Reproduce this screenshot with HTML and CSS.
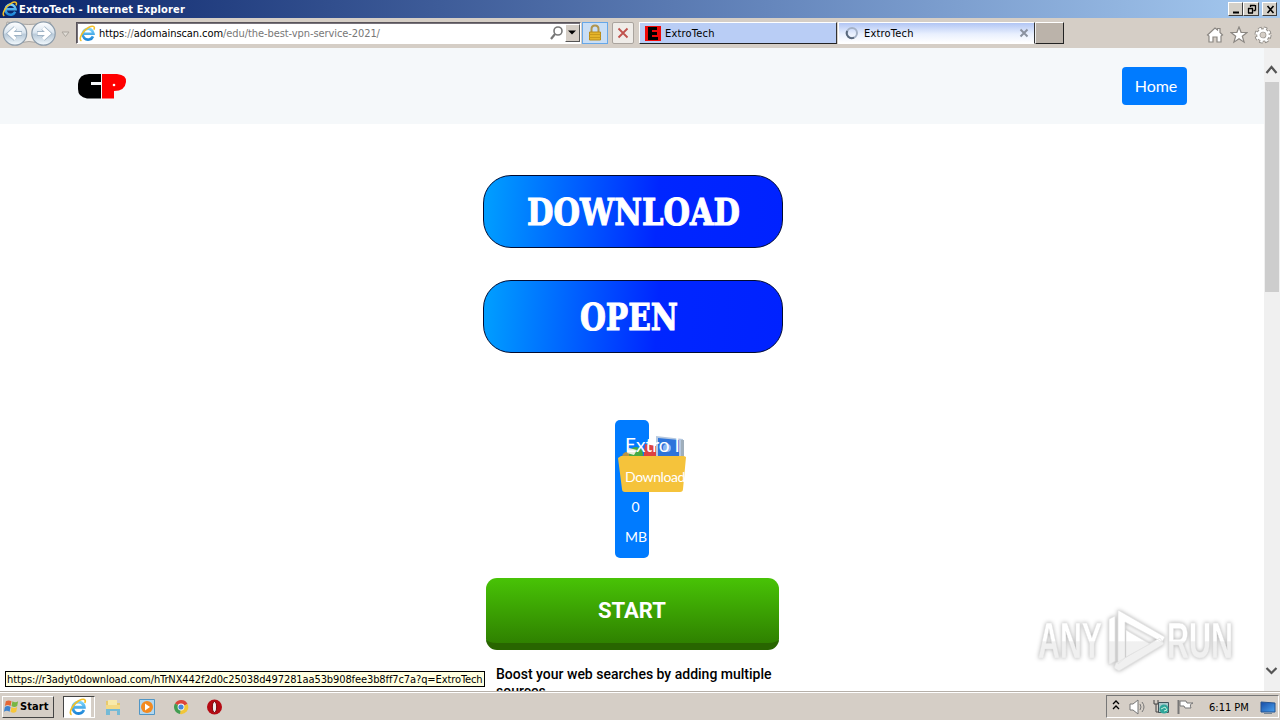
FILE: index.html
```html
<!DOCTYPE html>
<html lang="en">
<head>
<meta charset="utf-8">
<title>ExtroTech</title>
<link rel="stylesheet" href="styles.css">
</head>
<body>
<svg class="defs" width="0" height="0">
  <defs>
    <linearGradient id="ieBlue" x1="0" y1="0" x2="0" y2="1"><stop offset="0" stop-color="#7bd3fb"/><stop offset="1" stop-color="#1c86d8"/></linearGradient>
    <linearGradient id="orb" x1="0" y1="0" x2="0" y2="1"><stop offset="0" stop-color="#ffffff"/><stop offset=".45" stop-color="#dbe6f0"/><stop offset=".55" stop-color="#b9cad9"/><stop offset="1" stop-color="#f4fbff"/></linearGradient>
    <linearGradient id="screen" x1="0" y1="0" x2="1" y2="1"><stop offset="0" stop-color="#154ba5"/><stop offset="1" stop-color="#4ba2ef"/></linearGradient>
    <linearGradient id="mark" gradientUnits="userSpaceOnUse" x1="0" y1="0" x2="0" y2="70"><stop offset=".5" stop-color="#ffffff"/><stop offset=".51" stop-color="#f0f0f0"/></linearGradient>
    <symbol id="ie" viewBox="0 0 16 16">
      <path d="M13.2 10.7A5.1 5.1 0 1 1 13.6 8.2H4.5" fill="none" stroke="url(#ieBlue)" stroke-width="2.5"/>
      <path d="M2.3 14.9C-.8 13.2 3.5 5.2 9 2.3c4-2.2 6.600-1.200 5 2.100" fill="none" stroke="#f3bf28" stroke-width="1.500"/>
    </symbol>
  </defs>
</svg>
<header class="titlebar">
  <svg class="title-icon" width="16" height="16"><use href="#ie"/></svg>
  <span class="title-text">ExtroTech - Internet Explorer</span>
  <div class="win-buttons">
    <span class="win-btn"><svg width="14" height="11"><path d="M3 8.500h6" stroke="#000" stroke-width="2"/></svg></span>
    <span class="win-btn"><svg width="14" height="11"><path d="M5 1.500h5M5.500 1v2M10.500 1v5.500M8.500 6.500h2M3 4.500h5M3.500 4v5M7.500 4v5M3 9h5" fill="none" stroke="#000" stroke-width="1.300"/></svg></span>
    <span class="win-btn win-close"><svg width="14" height="11"><path d="M3.500 2l6 7M9.500 2l-6 7" stroke="#000" stroke-width="1.600"/></svg></span>
  </div>
</header>
<nav class="toolbar">
  <svg class="nav-arrows" width="76" height="29" viewBox="0 0 76 29">
    <path d="M7 4Q29 9 50 4L55 15Q47 27 42 27Q29 20 16 27L4 20Z" fill="#eeeae5" stroke="#aaa6a1"/>
    <g fill="url(#orb)" stroke="#8c9cab" stroke-width="1.200"><circle cx="15" cy="15.500" r="11.700"/><circle cx="43.500" cy="15.500" r="11.700"/></g>
    <g fill="none" stroke="#9fb3c5" stroke-width="4.800"><path d="M22 15.500H10M15.500 10l-6 5.500 6 5.500M37 15.500h12M43 10l6 5.500-6 5.500"/></g>
    <g fill="none" stroke="#fff" stroke-width="3.200"><path d="M21.500 15.500H10M15.500 10l-6 5.500 6 5.500M37.500 15.500h12M43 10l6 5.500-6 5.500"/></g>
    <path d="M62 14h7l-3.500 4.500Z" fill="#e1ddd7" stroke="#aaa59e"/>
  </svg>
  <div class="address">
    <svg width="17" height="17"><use href="#ie"/></svg>
    <span class="url"><span class="dark">https</span>://<span class="dark">adomainscan.com</span>/edu/the-best-vpn-service-2021/</span>
    <svg class="search" width="15" height="16"><circle cx="9" cy="6" r="4" fill="none" stroke="#777" stroke-width="1.600"/><path d="M6 9l-4 5" stroke="#777" stroke-width="2.200"/></svg>
    <span class="drop"><svg width="12" height="15"><path d="M2 5.500h8L6 9.500Z"/></svg></span>
  </div>
  <span class="lock"><svg width="16" height="18"><path d="M4.500 8V5q0-3.500 3.500-3.500T11.500 5v3" fill="none" stroke="#b0954d" stroke-width="2"/><path d="M2.500 8h11v8h-11z" fill="#e4b42a" stroke="#b98b1a"/><path d="M2.500 10.500h11M2.500 13.500h11" stroke="#c99a1c"/></svg></span>
  <span class="stop"><svg width="14" height="14"><path d="M2.500 2.500l9 9M11.500 2.500l-9 9" stroke="#c0524d" stroke-width="1.800"/></svg></span>
  <div class="tab tab-one"><svg width="16" height="15"><path d="M0 0h16v15H0z" fill="#f00808"/><path d="M3 1h9v3H7v2h5v3H7v2h6v3H3z"/></svg><span class="tab-text">ExtroTech</span></div>
  <div class="tab tab-two"><svg width="14" height="14"><circle cx="7" cy="7" r="5" fill="none" stroke="#a4b1c6" stroke-width="2"/><path d="M2.200 5A5 5 0 0 0 9 11.600" fill="none" stroke="#59687d" stroke-width="2"/></svg><span class="tab-text">ExtroTech</span><svg class="tab-close" width="10" height="10"><path d="M1.500 1.500l7 7M8.500 1.500l-7 7" stroke="#8b929f" stroke-width="2"/></svg></div>
  <span class="new-tab"></span>
  <div class="tools">
    <svg width="18" height="18"><path d="M1.500 9L9 2l2.500 2V2.500H14v4L16.500 9 15 10v6h-4v-5H7v5H3v-6z" fill="#fff" stroke="#8b8782" stroke-width="1.200"/></svg>
    <svg width="18" height="18"><path d="M9 1l2.100 5.300 5.900.2-4.700 3.700 1.800 6L9 12.800l-5.100 3.400 1.800-6L1 6.500l5.900-.2Z" fill="#fff" stroke="#8b8782" stroke-width="1.200"/></svg>
    <svg width="18" height="18"><circle cx="9" cy="9" r="6.500" fill="none" stroke="#8b8782" stroke-width="4" stroke-dasharray="3.100 2"/><circle cx="9" cy="9" r="4.700" fill="none" stroke="#8b8782" stroke-width="4"/><circle cx="9" cy="9" r="6.300" fill="none" stroke="#fff" stroke-width="2.600" stroke-dasharray="2.400 2.550"/><circle cx="9" cy="9" r="4.600" fill="none" stroke="#fff" stroke-width="2.500"/></svg>
  </div>
</nav>
<main class="viewport">
  <div class="page">
    <header class="site-header">
      <svg class="logo" width="50" height="28" viewBox="0 0 50 28">
        <path d="M24 2V10H14v3h10V26.500H10Q1 25 1 17V12Q2 2 12 2Z"/>
        <path d="M14 12h9" stroke="#f5f8fa" stroke-width="1.500"/><path d="M25 2h15q10 1 9 8-1 9-12 9v7.500H25Z" fill="#f00"/><circle cx="37" cy="13" r="1.300" fill="#fff"/>
      </svg>
      <a class="home">Home</a>
    </header>
    <a class="pill"><svg width="298" height="71"><text x="43" y="49" textLength="213" lengthAdjust="spacingAndGlyphs">DOWNLOAD</text></svg></a>
    <a class="pill pill-open"><svg width="298" height="71"><text x="96" y="49" textLength="98" lengthAdjust="spacingAndGlyphs">OPEN</text></svg></a>
    <div class="offer">
      <svg class="folder" width="70" height="60" viewBox="0 0 70 60">
        <path d="M38 1l27 3v23H38Z" fill="#b5c8df"/><path d="M40 3l21 2v20H40Z" fill="#2d74db"/><circle cx="49" cy="13" r="4" fill="#8ab6f4"/><path d="M63 5h3v18h-3z" fill="#9faebb"/>
        <circle cx="9" cy="22" r="5" fill="#b59447"/><circle cx="18" cy="19" r="7" fill="#47aa43"/><path d="M27 9l11 2v16H25Z" fill="#dc4141"/><path d="M11 13l8 2-3 5-7-2Z" fill="#e9edda"/>
        <path d="M0 23l3-2h63l2 1-3 32q0 3-3 3H7q-3 0-3-3Z" fill="#f5c33b"/>
      </svg>
      <div class="offer-title">Extro I</div>
      <div class="offer-sub">Download</div>
      <div class="offer-size">0</div>
      <div class="offer-unit">MB</div>
    </div>
    <a class="start">START</a>
    <p class="copy">Boost your web searches by adding multiple<br>sources.</p>
  </div>
  <aside class="scrollbar">
    <svg width="16" height="34"><path d="M2.500 25l5-6 5 6" fill="none" stroke="#555" stroke-width="2.200"/></svg>
    <span class="thumb"></span>
    <svg class="scroll-down" width="16" height="30"><path d="M2.500 7l5 5 5-5" fill="none" stroke="#555" stroke-width="2.200"/></svg>
  </aside>
  <div class="status">https://r3adyt0download.com/hTrNX442f2d0c25038d497281aa53b908fee3b8ff7c7a?q=ExtroTech</div>
  <svg class="watermark" width="204" height="70" viewBox="0 0 204 70">
    <g class="mark-text"><text x="4" y="52" textLength="64" lengthAdjust="spacingAndGlyphs">ANY</text><text x="133" y="52" textLength="66" lengthAdjust="spacingAndGlyphs">RUN</text></g>
    <path class="mark-shape" d="M75 13l6-3v45l-6 4ZM84 4l47 27-3 5-37-20v36l-7 6ZM82 57l44-25 4 6-45 27-5-3ZM92 24l24 14-24 13Z"/>
  </svg>
</main>
<footer class="taskbar">
  <div class="start-menu"><svg width="17" height="18" viewBox="0 0 18 18"><path d="M3 3q3-2 6 0L8 8Q5 6 2 8Z" fill="#e56735"/><path d="M10 3q3 2 6 0l-1 5q-3 2-6 0Z" fill="#78b645"/><path d="M2 9q3-2 6 0l-1 5q-3-2-6 0Z" fill="#3e83ce"/><path d="M9 9q3 2 6 0l-1 5q-3 2-6 0Z" fill="#f7c63a"/></svg><span>Start</span></div>
  <div class="task-active"><svg width="18" height="18"><use href="#ie"/></svg></div>
  <div class="launch">
    <svg width="18" height="18"><path d="M2 3h5l1 2h8v5H2z" fill="#e7c96d"/><path d="M4 2h9v5H4z" fill="#f8eaaa"/><path d="M2 9h14v8h-3v-4H6v4H2z" fill="#75bad6"/><path d="M2 7h14v4H2z" fill="#f3da86"/></svg>
    <svg width="18" height="18"><path d="M1.500 1.500h15v15h-15z" fill="#b2d7ef" stroke="#5196c5"/><circle cx="9" cy="9" r="6" fill="#f38a20"/><path d="M7 5.500v7l5-3.500z" fill="#fff"/></svg>
    <svg width="18" height="18" viewBox="0 0 18 18"><path d="M9 9L3 5.500A7 7 0 0 1 15.500 6Z" fill="#dc453b"/><path d="M9 9l6.500-3A7 7 0 0 1 8 16Z" fill="#f1c638"/><path d="M9 9L8 16A7 7 0 0 1 3 5.500Z" fill="#429d51"/><circle cx="9" cy="9" r="3.400" fill="#fff"/><circle cx="9" cy="9" r="2.600" fill="#4587dc"/></svg>
    <svg width="18" height="18"><circle cx="8.500" cy="9" r="7.500" fill="#b50a13"/><ellipse cx="8.500" cy="9" rx="2.200" ry="5.500" fill="#eee" stroke="#740006"/></svg>
  </div>
  <div class="tray">
    <svg width="142" height="22" viewBox="0 0 142 22">
      <path d="M6 8l3-3 3 3M6 13l3-3 3 3" fill="none" stroke="#000" stroke-width="1.300"/>
      <path d="M23 8h3l5-4v14l-5-4h-3z" fill="#fff" stroke="#777"/><path d="M33 8q2 3 0 6M35 6q4 5 0 10" fill="none" stroke="#777"/>
      <path d="M51.500 6.500h10v10h-10z" fill="#a7c9cb" stroke="#42545c"/><path d="M47 4v4h4V4M49 8v8h3" fill="none" stroke="#444"/><circle cx="57" cy="13" r="4.500" fill="#2fa69a"/><path d="M54 13l4-2 2 3-3 1" stroke="#c8f0dd" fill="none"/>
      <path d="M71.500 4v14" stroke="#777" stroke-width="2"/><path d="M73 5h6l1 2h6q-4 1-2 5h-6l-1-2h-4z" fill="#fff" stroke="#777"/>
    </svg>
    <span class="clock">6:11 PM</span>
    <svg class="desktop-icon" width="16" height="16"><path d="M1 3l14 1v9H1z" fill="url(#screen)" stroke="#24538f"/><path d="M4 14h8v1H4z" fill="#758696"/></svg>
  </div>
</footer>
</body>
</html>
```
FILE: styles.css
```css
* { box-sizing: border-box; }
body { margin: 0; width: 1280px; height: 720px; overflow: hidden; display: flex; flex-direction: column; background: #fff; color: #000; font-family: "DejaVu Sans Condensed", "DejaVu Sans", sans-serif; font-size: 11px; }
svg { display: block; flex: none; }
.defs { position: absolute; }
.titlebar { height: 18px; flex: none; display: flex; align-items: center; padding: 0 2px; background: linear-gradient(90deg, #0a246a, #6586bc 60%, #a6caf0); color: #fff; }
.title-text { margin-left: 1px; font-weight: bold; white-space: nowrap; letter-spacing: .16px; }
.win-buttons { margin-left: auto; display: flex; padding-right: 1px; }
.win-btn { width: 15.500px; height: 14px; padding: 1px; overflow: hidden; background: #d4d0c8; border: 1px solid; border-color: #fff #404040 #404040 #fff; }
.win-close { margin-left: 3px; }
.toolbar { height: 30px; flex: none; display: flex; align-items: flex-start; padding-top: 4px; background: #d5cec6; }
.nav-arrows { margin-top: -4px; }
.address { width: 505px; height: 22px; display: flex; align-items: center; padding-left: 2px; background: #fff; border: 1px solid; border-color: #59545a #fff #fff #59545a; box-shadow: inset 1px 1px #77727a; }
.url { margin-left: 3px; width: 450px; padding-top: 1px; white-space: nowrap; color: #777; letter-spacing: -.08px; }
.dark { color: #000; }
.drop { margin-left: 1px; width: 15px; height: 18px; background: #d5cec6; border: 1px solid; border-color: #fff #555 #555 #fff; }
.lock { width: 26px; height: 22px; margin-left: 1px; padding: 1px 4px; background: #c9def5; border: 1px solid #66a7e8; }
.stop { width: 22px; height: 22px; margin-left: 4px; padding: 3px; background: #efece8; border: 1px solid #aaa49e; border-radius: 2px; }
.tab { height: 22px; display: flex; align-items: center; border: 1px solid; border-color: #fff #333 #222 #fff; }
.tab-one { width: 198px; margin-left: 5px; padding-left: 5px; background: #b9cdf5; }
.tab-two { width: 197px; margin-left: 1px; padding-left: 6px; background: linear-gradient(#b1c5f4, #e9f0fe 55%, #fff); border-bottom-color: #fff; }
.tab-text { margin-left: 4px; padding-top: 1px; white-space: nowrap; letter-spacing: .2px; }
.tab-two .tab-text { margin-left: 5px; }
.tab-close { margin-left: auto; margin-right: 5px; }
.new-tab { width: 29px; height: 22px; background: #bbb3aa; border: 1px solid; border-color: #fff #222 #222 #eee; }
.tools { margin: 4px 8px 0 auto; display: flex; gap: 6px; }
.viewport { position: relative; height: 644px; flex: none; display: flex; overflow: hidden; border-bottom: 1px solid #b6b0a9; }
.page { width: 1264px; height: 643px; overflow: hidden; display: flex; flex-direction: column; }
.site-header { height: 76px; flex: none; display: flex; align-items: center; justify-content: space-between; padding: 0 77px; background: #f5f8fa; }
.home { width: 65px; height: 38px; background: #007bff; color: #fff; border-radius: 4px; font: 16px/38px Lato, sans-serif; text-align: center; padding-left: 3px; }
.pill { width: 300px; height: 73px; flex: none; margin: 51px 0 0 483px; border: 1px solid #000b32; border-radius: 28px; background: linear-gradient(94deg, #00a0ff, #0026ff 58%, #0022ff); overflow: hidden; }
.pill-open { margin-top: 32px; }
.pill text { fill: #fff; stroke: #fff; stroke-width: 1px; font: bold 38px "DejaVu Serif Condensed", "DejaVu Serif", serif; }
.offer { position: relative; width: 34px; height: 138px; flex: none; margin: 67px 0 0 615px; padding: 10px 0 0 10px; background: #007bff; border-radius: 5px; color: #fff; font: 14px/30px Lato, sans-serif; white-space: nowrap; }
.folder { position: absolute; left: 3px; top: 15px; }
.offer > div { position: relative; height: 30px; }
.offer .offer-title { height: 32px; font-size: 19px; }
.offer-sub { letter-spacing: -.4px; }
.offer .offer-size { padding-left: 6.500px; }
.start { width: 293px; height: 72px; flex: none; margin: 20px 0 0 486px; border-radius: 11px; border-bottom: 7px solid #286500; background: linear-gradient(#48c306, #2f8100); color: #fff; font: bold 22px/65px Roboto, sans-serif; text-align: center; padding-right: 1px; }
.copy { width: 295px; margin: 16px 0 0 496px; font: 500 14px/17px Roboto, sans-serif; white-space: nowrap; }
.scrollbar { width: 16px; display: flex; flex-direction: column; background: #f0f0f0; }
.thumb { width: 14px; height: 210px; margin-left: 1px; background: #cdcdcd; }
.scroll-down { margin-top: auto; }
.status { position: absolute; left: 5px; top: 623px; width: 480px; height: 16px; background: #ffffe1; border: 1px solid #000; line-height: 15px; padding-left: 1px; white-space: nowrap; letter-spacing: -.1px; }
.watermark { position: absolute; left: 1034px; top: 558px; overflow: visible; filter: drop-shadow(0 0 2px rgba(0,0,0,.32)); }
.mark-text { fill: url(#mark); stroke: #e4e4e4; stroke-width: .4; font: bold 50px "Liberation Sans Narrow", "Liberation Sans", sans-serif; }
.mark-shape { fill: url(#mark); stroke: #e2e2e2; stroke-width: .7; }
.taskbar { height: 28px; flex: none; display: flex; align-items: center; background: #d5cec6; border-top: 1px solid #fff; }
.start-menu { width: 52px; height: 22px; margin-left: 2px; display: flex; align-items: center; border: 1px solid; border-color: #fff #444 #444 #fff; font-weight: bold; letter-spacing: .1px; }
.task-active { width: 32px; height: 22px; margin-left: 9px; padding: 1px 5px; background: #fff; border: 1px solid; border-color: #444 #fff #fff #444; box-shadow: inset -3px 0 #d5cec6; }
.launch { display: flex; gap: 16px; margin-left: 9px; }
.tray { width: 173px; height: 23px; margin: 0 1px 0 auto; position: relative; display: flex; align-items: center; border: 1px solid; border-color: #777 #fff #fff #777; }
.clock { position: absolute; left: 102px; top: 5px; white-space: nowrap; }
.desktop-icon { margin-left: 11px; }
```
